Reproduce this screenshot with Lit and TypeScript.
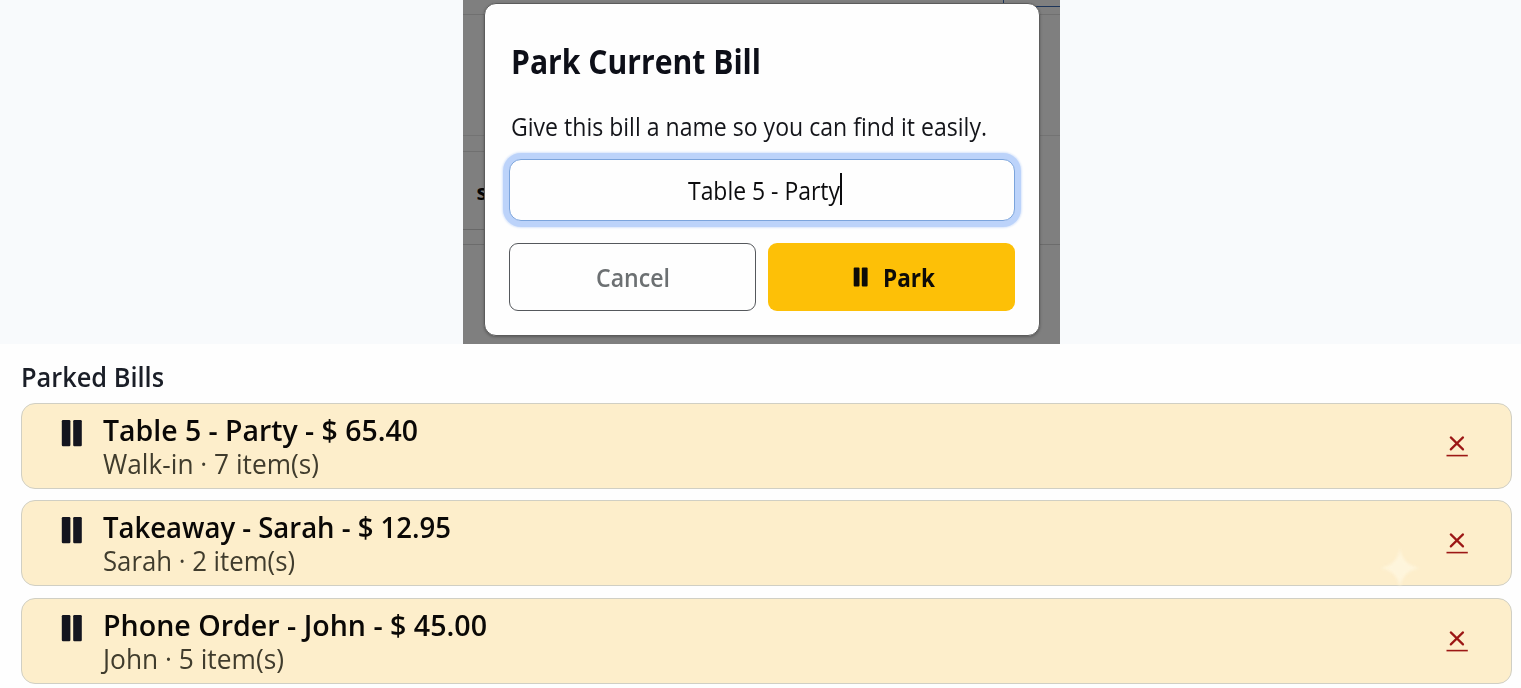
import { LitElement, html, css } from "lit";
import { customElement, property } from "lit/decorators.js";

const FONT = css`"Open Sans", "Noto Sans", sans-serif`;

/** One line of text condensed or widened to an exact measure. */
@customElement("fit-text")
class FitText extends LitElement {
  @property({ type: Number }) measure = 100;
  @property() text = "";
  static styles = css`
    :host { display: block; flex: none; white-space: nowrap; }
    .box { display: block; }
    .line { display: inline-block; transform-origin: 0 50%; vertical-align: top; }
  `;
  render() {
    return html`<span class="box"><span class="line">${this.text}</span></span>`;
  }
  updated() {
    const box = this.renderRoot.querySelector(".box") as HTMLElement;
    const line = this.renderRoot.querySelector(".line") as HTMLElement;
    line.style.transform = "none";
    const natural = line.getBoundingClientRect().width;
    box.style.width = `${this.measure}px`;
    line.style.transform = `scaleX(${this.measure / natural})`;
  }
}

@customElement("parked-bill")
class ParkedBill extends LitElement {
  @property() name = "";
  @property() detail = "";
  @property({ type: Number }) nameWidth = 0;
  @property({ type: Number }) detailWidth = 0;
  static styles = css`
    :host { display: block; }
    .card {
      box-sizing: border-box; height: 86px; display: flex;
      border: 1.5px solid #d0cfc4; border-radius: 14px; background: #fdeecb;
      padding: 0 43.5px 0 38.5px; font-family: ${FONT};
    }
    .pause { flex: none; width: 22px; height: 28px; margin-top: 15px; }
    .lines { flex: 1; margin: 8px 0 0 20.5px; }
    .name { font-size: 28px; font-weight: 600; line-height: 36px; color: #0a0806; }
    .detail { font-size: 26.5px; line-height: 32px; color: #403c2d; }
    .remove { flex: none; width: 22px; height: 24px; margin-top: 30px; }
  `;
  render() {
    return html`
      <div class="card">
        <svg class="pause" viewBox="0 0 22 28" fill="#14151f">
          <rect x=".8" y="1" width="8.6" height="26.2" rx="1.2" />
          <rect x="12.2" y="1" width="8.6" height="26.2" rx="1.2" />
        </svg>
        <div class="lines">
          <fit-text class="name" .text=${this.name} .measure=${this.nameWidth}></fit-text>
          <fit-text class="detail" .text=${this.detail} .measure=${this.detailWidth}></fit-text>
        </div>
        <svg class="remove" viewBox="0 0 22 24" stroke="#9c1715" fill="none">
          <path d="M4.8 3.4 17 15.4M17 3.4 4.8 15.4" stroke-width="2.2" stroke-linecap="round" />
          <path d="M.5 21.6H21.8" stroke-width="1.6" />
        </svg>
      </div>
    `;
  }
}

const BILLS = [
  { name: "Table 5 - Party - $ 65.40", detail: "Walk-in · 7 item(s)", nw: 315, dw: 216 },
  { name: "Takeaway - Sarah - $ 12.95", detail: "Sarah · 2 item(s)", nw: 348, dw: 192 },
  { name: "Phone Order - John - $ 45.00", detail: "John · 5 item(s)", nw: 384, dw: 181 },
];

@customElement("app-root")
class AppRoot extends LitElement {
  static styles = css`
    :host { display: block; position: relative; width: 1521px; height: 688px; overflow: hidden; background: #fefefe; font-family: ${FONT}; }
    .stage { height: 344px; background: #f8fafc; display: flex; justify-content: center; }
    .backdrop {
      position: relative; box-sizing: border-box; width: 597px; height: 344px; padding: 3px 20px 0 21px; overflow: hidden;
      margin-left: 2px;
      background:
        linear-gradient(#1d355a, #1d355a) 540px 0 / 1px 7px no-repeat,
        linear-gradient(#1d355a, #1d355a) 540px 6px / 57px 1px no-repeat,
        linear-gradient(#707070, #707070) 0 14px / 100% 1px no-repeat,
        linear-gradient(#737373, #737373) 0 135px / 100% 1px no-repeat,
        linear-gradient(#707070, #707070) 0 151px / 22px 1px no-repeat,
        linear-gradient(#686868, #686868) 0 229px / 22px 1px no-repeat,
        linear-gradient(#6c6c6c, #6c6c6c) 0 244px / 100% 1px no-repeat,
        #7f7f7f;
    }
    .behind { position: absolute; left: 13.5px; top: 176px; font-size: 22px; line-height: 30px; font-weight: 700; color: #050505; }
    .modal {
      position: relative; box-sizing: border-box; width: 556px; height: 333px; background: #fefefe; border: 1px solid #5c5c5c;
      border-radius: 12px; padding: 0 24px 0 24px;
      box-shadow: 0 1px 3px rgba(0, 0, 0, .3);
    }
    .title { padding: 33.5px 0 0 2px; font-size: 33.5px; line-height: 46px; font-weight: 700; color: #0d0f18; }
    .hint { padding: 25.5px 0 0 2px; font-size: 25px; line-height: 34px; color: #14151a; }
    .field {
      box-sizing: border-box; height: 62px; margin-top: 16px; border: 1.5px solid #7ba4dc; border-radius: 12px;
      box-shadow: 0 0 0 6px #bcd3fa, 0 0 2px 7px #d9e6fb; background: #fefefe; padding-left: 5px;
      display: flex; justify-content: center; align-items: center; font-size: 25px; line-height: 34px; color: #0c0c0e;
    }
    .caret { width: 2px; height: 32px; background: #0c0c0e; margin-top: -2px; }
    .actions { display: grid; grid-template-columns: 1fr 1fr; gap: 12px; margin-top: 22px; }
    .btn { box-sizing: border-box; height: 68px; border-radius: 9px; display: flex; justify-content: center; align-items: center; font-size: 25px; line-height: 34px; }
    .cancel { border: 1.5px solid #55585c; color: #6c7072; font-weight: 600; }
    .park { background: #fdc007; color: #0d0b08; font-weight: 700; gap: 14px; padding-left: 5px; }
    .park svg { width: 16px; height: 20px; }
    .list { padding: 16px 9px 0 21px; }
    .heading { font-size: 26.5px; line-height: 34px; font-weight: 600; color: #1a1e27; margin-bottom: 8.5px; }
    .cards { display: grid; gap: 11.5px; }
    .spark { position: absolute; left: 1380px; top: 548px; width: 40px; height: 40px; filter: blur(1.5px); }
  `;
  render() {
    return html`
      <div class="stage">
        <div class="backdrop">
          <span class="behind">s</span>
          <div class="modal">
            <fit-text class="title" text="Park Current Bill" .measure=${250}></fit-text>
            <fit-text class="hint" text="Give this bill a name so you can find it easily." .measure=${476}></fit-text>
            <div class="field">
              <fit-text text="Table 5 - Party" .measure=${152}></fit-text>
              <span class="caret"></span>
            </div>
            <div class="actions">
              <div class="btn cancel"><fit-text text="Cancel" .measure=${74}></fit-text></div>
              <div class="btn park">
                <svg viewBox="0 0 16 20" fill="#0d0b08">
                  <rect x=".7" y=".4" width="5.8" height="19.2" rx="1" />
                  <rect x="8.8" y=".4" width="5.8" height="19.2" rx="1" />
                </svg>
                <fit-text text="Park" .measure=${52}></fit-text>
              </div>
            </div>
          </div>
        </div>
      </div>
      <div class="list">
        <fit-text class="heading" text="Parked Bills" .measure=${143}></fit-text>
        <div class="cards">
          ${BILLS.map(
            (b) => html`<parked-bill .name=${b.name} .detail=${b.detail} .nameWidth=${b.nw} .detailWidth=${b.dw}></parked-bill>`
          )}
        </div>
      </div>
      <svg class="spark" viewBox="0 0 40 40" fill="#fef5dc">
        <path d="M20 0C22 12 28 18 40 20 28 22 22 28 20 40 18 28 12 22 0 20 12 18 18 12 20 0Z" />
      </svg>
    `;
  }
}
